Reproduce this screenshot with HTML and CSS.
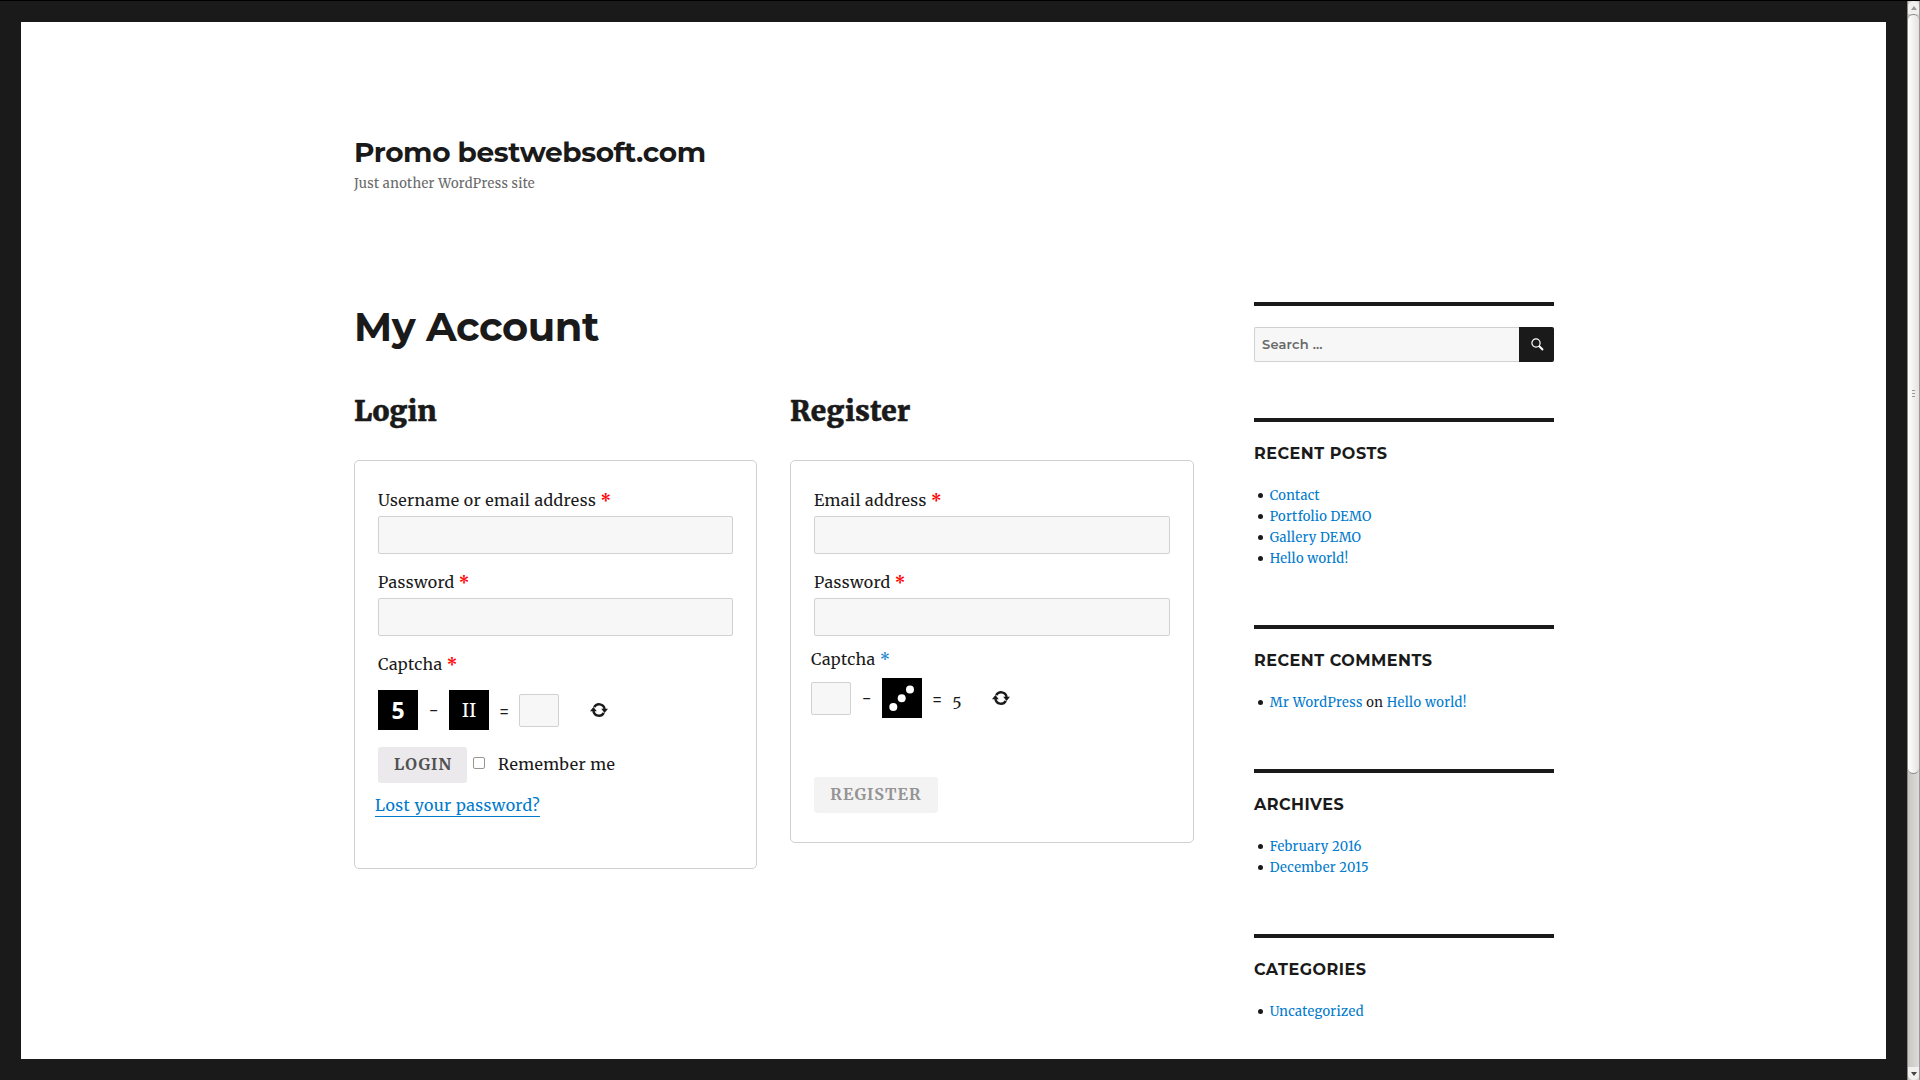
FILE: index.html
```html
<!DOCTYPE html>
<html lang="en">
<head>
<meta charset="utf-8">
<title>My Account – Promo bestwebsoft.com</title>
<link rel="stylesheet" href="styles.css">
</head>
<body>
<svg class="defs" width="0" height="0" aria-hidden="true">
  <symbol id="refresh" viewBox="0 0 18 14">
    <path d="M4.2 4.2A5.6 5.6 0 0 1 14.6 6M13.8 9.8A5.6 5.6 0 0 1 3.4 8" fill="none" stroke="currentColor" stroke-width="2.4"/>
    <path d="M0 8.2 3.4 4 6.8 8.2zM11.2 5.8h6.8L14.6 10z" fill="currentColor"/>
  </symbol>
</svg>
<div class="window">
  <div class="page">
    <div class="inner">
      <header class="masthead">
        <h1 class="site-title">Promo bestwebsoft.com</h1>
        <p class="tagline">Just another WordPress site</p>
      </header>
      <div class="content">
        <main class="main">
          <h1 class="entry-title">My Account</h1>
          <div class="columns">
            <section class="col-login">
              <h2 class="form-title">Login</h2>
              <form class="panel panel-login">
                <label class="label">Username or email address <b class="req">*</b></label>
                <input class="field" type="text">
                <label class="label">Password <b class="req">*</b></label>
                <input class="field" type="password">
                <label class="label">Captcha <b class="req">*</b></label>
                <div class="captcha">
                  <span class="tile tile-digit">5</span>
                  <span class="op">−</span>
                  <span class="tile tile-roman">II</span>
                  <span class="op op-eq">=</span>
                  <input class="answer" type="text">
                  <svg class="refresh"><use href="#refresh"/></svg>
                </div>
                <div class="actions">
                  <button class="button" type="button">LOGIN</button>
                  <input class="check" type="checkbox">
                  <span class="remember">Remember me</span>
                </div>
                <a class="lost">Lost your password?</a>
              </form>
            </section>
            <section class="col-register">
              <h2 class="form-title">Register</h2>
              <form class="panel panel-register">
                <label class="label">Email address <b class="req">*</b></label>
                <input class="field" type="text">
                <label class="label">Password <b class="req">*</b></label>
                <input class="field" type="password">
                <div class="captcha-block">
                  <label class="label">Captcha <span class="req-blue">*</span></label>
                  <div class="captcha">
                    <input class="answer" type="text">
                    <span class="op">−</span>
                    <span class="tile"><svg width="40" height="40" fill="#fff"><circle cx="11.3" cy="29" r="4"/><circle cx="19.7" cy="20.3" r="4"/><circle cx="28" cy="11.5" r="4"/></svg></span>
                    <span class="op op-eq">=</span>
                    <span class="result">5</span>
                    <svg class="refresh"><use href="#refresh"/></svg>
                  </div>
                </div>
                <button class="button button-off" type="button">REGISTER</button>
              </form>
            </section>
          </div>
        </main>
        <aside class="sidebar">
          <section class="widget widget-search">
            <form class="search">
              <input class="search-field" type="text" placeholder="Search …">
              <button class="search-button" type="button"><svg width="13" height="13" viewBox="0 0 13 13" fill="none" stroke="#fff"><circle cx="5" cy="5" r="4.1" stroke-width="1.2"/><path d="M7.8 7.8 12 12" stroke-width="2"/></svg></button>
            </form>
          </section>
          <section class="widget">
            <h2 class="widget-title">RECENT POSTS</h2>
            <ul class="list"><li><a>Contact</a></li><li><a>Portfolio DEMO</a></li><li><a>Gallery DEMO</a></li><li><a>Hello world!</a></li></ul>
          </section>
          <section class="widget">
            <h2 class="widget-title">RECENT COMMENTS</h2>
            <ul class="list list-comments"><li><a>Mr WordPress</a> on <a>Hello world!</a></li></ul>
          </section>
          <section class="widget">
            <h2 class="widget-title">ARCHIVES</h2>
            <ul class="list"><li><a>February 2016</a></li><li><a>December 2015</a></li></ul>
          </section>
          <section class="widget">
            <h2 class="widget-title">CATEGORIES</h2>
            <ul class="list"><li><a>Uncategorized</a></li></ul>
          </section>
        </aside>
      </div>
    </div>
  </div>
  <div class="scrollbar">
    <div class="arrow"><svg width="6" height="4"><path d="M0 4 3 0 6 4z" fill="#999"/></svg></div>
    <div class="thumb"><i></i><i></i><i></i></div>
    <div class="track"></div>
    <div class="arrow arrow-down"><svg width="6" height="4"><path d="M0 0 3 4 6 0z" fill="#444"/></svg></div>
  </div>
</div>
</body>
</html>
```
FILE: styles.css
```css
* { box-sizing: border-box; margin: 0; padding: 0; }

body {
  background: #1a1a1a;
  color: #1a1a1a;
  font: 16px/28px Merriweather, "Noto Serif", "DejaVu Serif", serif;
  overflow: hidden;
}

.defs { display: block; }
.window { display: flex; height: 1080px; border-top: 1px solid #000; }
.page { flex: 1; margin: 21px 21px 21px; background: #fff; overflow: hidden; }
.inner { width: 1200px; margin-left: 333px; }

.masthead { height: 280px; padding-top: 113px; }
.site-title { font: 700 28px/35px Montserrat, Inter, sans-serif; letter-spacing: -.42px; }
.tagline { margin-top: 5px; color: #686868; font-size: 13px; line-height: 18px; letter-spacing: .37px; }

.content { display: flex; justify-content: space-between; }
.main { width: 840px; padding-top: 2px; }
.entry-title { font: 700 40px/46px Montserrat, Inter, sans-serif; letter-spacing: -.45px; }
.columns { display: flex; justify-content: space-between; margin-top: 43px; }
.col-login { width: 403px; }
.col-register { width: 404px; }
.form-title { font-size: 28px; font-weight: 900; line-height: 36px; -webkit-text-stroke: .5px #1a1a1a; }
.col-register .form-title { letter-spacing: .3px; }

.panel {
  display: flex;
  flex-direction: column;
  align-items: flex-start;
  margin-top: 31px;
  padding: 25px 23px;
  border: 1px solid #d3ced2;
  border-radius: 5px;
}
.panel-login { height: 409px; }
.panel-register { height: 383px; }
.label { height: 28px; margin-bottom: 2px; white-space: pre; letter-spacing: .4px; }
.req { color: red; }
.req-blue { color: #007acc; }
.field, .answer, .search-field {
  background: #f7f7f7;
  border: 1px solid #d1d1d1;
  border-radius: 2px;
}
.field { width: 100%; height: 38px; margin-bottom: 14px; }

.captcha { display: flex; align-items: center; height: 40px; }
.panel-login .captcha { margin-top: 10px; }
.tile {
  display: flex;
  align-items: center;
  justify-content: center;
  width: 40px;
  height: 40px;
  background: #000;
  color: #fff;
}
.tile-digit { font: 700 23px/40px "Open Sans", sans-serif; }
.tile-roman { font: 20px/40px "Noto Serif", serif; }
.op { width: 31px; text-align: center; }
.op-eq { width: 30px; }
.answer { width: 40px; height: 33px; }
.refresh { width: 18px; height: 14px; margin-left: 31px; }

.actions { display: flex; align-items: center; margin-top: 17px; }
.button {
  height: 36px;
  padding: 0 15px 2px 16px;
  border: 0;
  border-radius: 3px;
  background: #ebe9eb;
  color: #515151;
  font: 700 16px/28px Merriweather, "Noto Serif", serif;
  letter-spacing: 1px;
}
.panel-login .button { width: 89px; }
.check { width: 12px; height: 12px; margin: 0 13px 4px 6px; appearance: none; border: 1px solid #989691; border-radius: 2px; }
.remember { height: 30px; letter-spacing: .4px; }
.lost { margin: 11px 0 0 -3px; height: 23px; line-height: 22px; color: #007acc; border-bottom: 1px solid #007acc; letter-spacing: .42px; }

.captcha-block { margin: -5px 0 0 -3px; }
.captcha-block .label { display: block; margin-bottom: 5px; }
.result { width: 10px; text-align: center; padding-top: 3px; font-feature-settings: "onum"; }
.captcha-block .refresh { margin-left: 30px; }
.button-off { width: 124px; padding: 0 15px 2px 15px; letter-spacing: 1.15px; margin-top: 59px; background: #f4f3f4; color: #949494; }

.sidebar { width: 300px; }
.widget { border-top: 4px solid #1a1a1a; padding-top: 22px; margin-bottom: 56px; }
.widget-search { padding-top: 21px; }
.search { display: flex; }
.search-field {
  width: 265px;
  height: 35px;
  padding: 0 7px 2px;
  border-right: 0;
  border-radius: 2px 0 0 2px;
  font: 600 13px/18px Montserrat, Inter, sans-serif;
  letter-spacing: .2px;
}
.search-field::placeholder { color: #686868; opacity: 1; }
.search-button {
  display: flex;
  align-items: center;
  justify-content: center;
  width: 35px;
  height: 35px;
  padding-left: 1px;
  border: 0;
  border-radius: 0 2px 2px 0;
  background: #1a1a1a;
}
.widget-title { font: 700 16px/20px Montserrat, Inter, sans-serif; letter-spacing: .5px; }
.list { margin-top: 21px; padding-left: 16px; list-style: none; font-size: 13px; line-height: 21px; letter-spacing: .3px; }
.list-comments { letter-spacing: .4px; }
.list li::before {
  content: "";
  display: inline-block;
  width: 5px;
  height: 5px;
  margin: 0 6.7px 2px -12px;
  border-radius: 50%;
  background: #1a1a1a;
}
.list a { color: #007acc; }

.scrollbar {
  display: flex;
  flex-direction: column;
  width: 13px;
  border-left: 1px solid #888;
  border-right: 1px solid #999;
  background: linear-gradient(90deg, #c8c6c3, #dedcda);
}
.arrow { display: flex; align-items: center; justify-content: center; height: 13px; background: #f1f0ef; border-radius: 6px 6px 0 0; }
.arrow-down { border-radius: 0 0 6px 6px; }
.thumb {
  display: flex;
  flex-direction: column;
  gap: 2px;
  align-items: center;
  justify-content: center;
  height: 760px;
  padding-bottom: 2px;
  border: 1px solid #8d8b88;
  border-width: 1px 0;
  border-radius: 6px;
  background: linear-gradient(90deg, #fff, #e4e2e0);
}
.thumb i { width: 3px; height: 1px; background: #999; }
.track { flex: 1; }
```
